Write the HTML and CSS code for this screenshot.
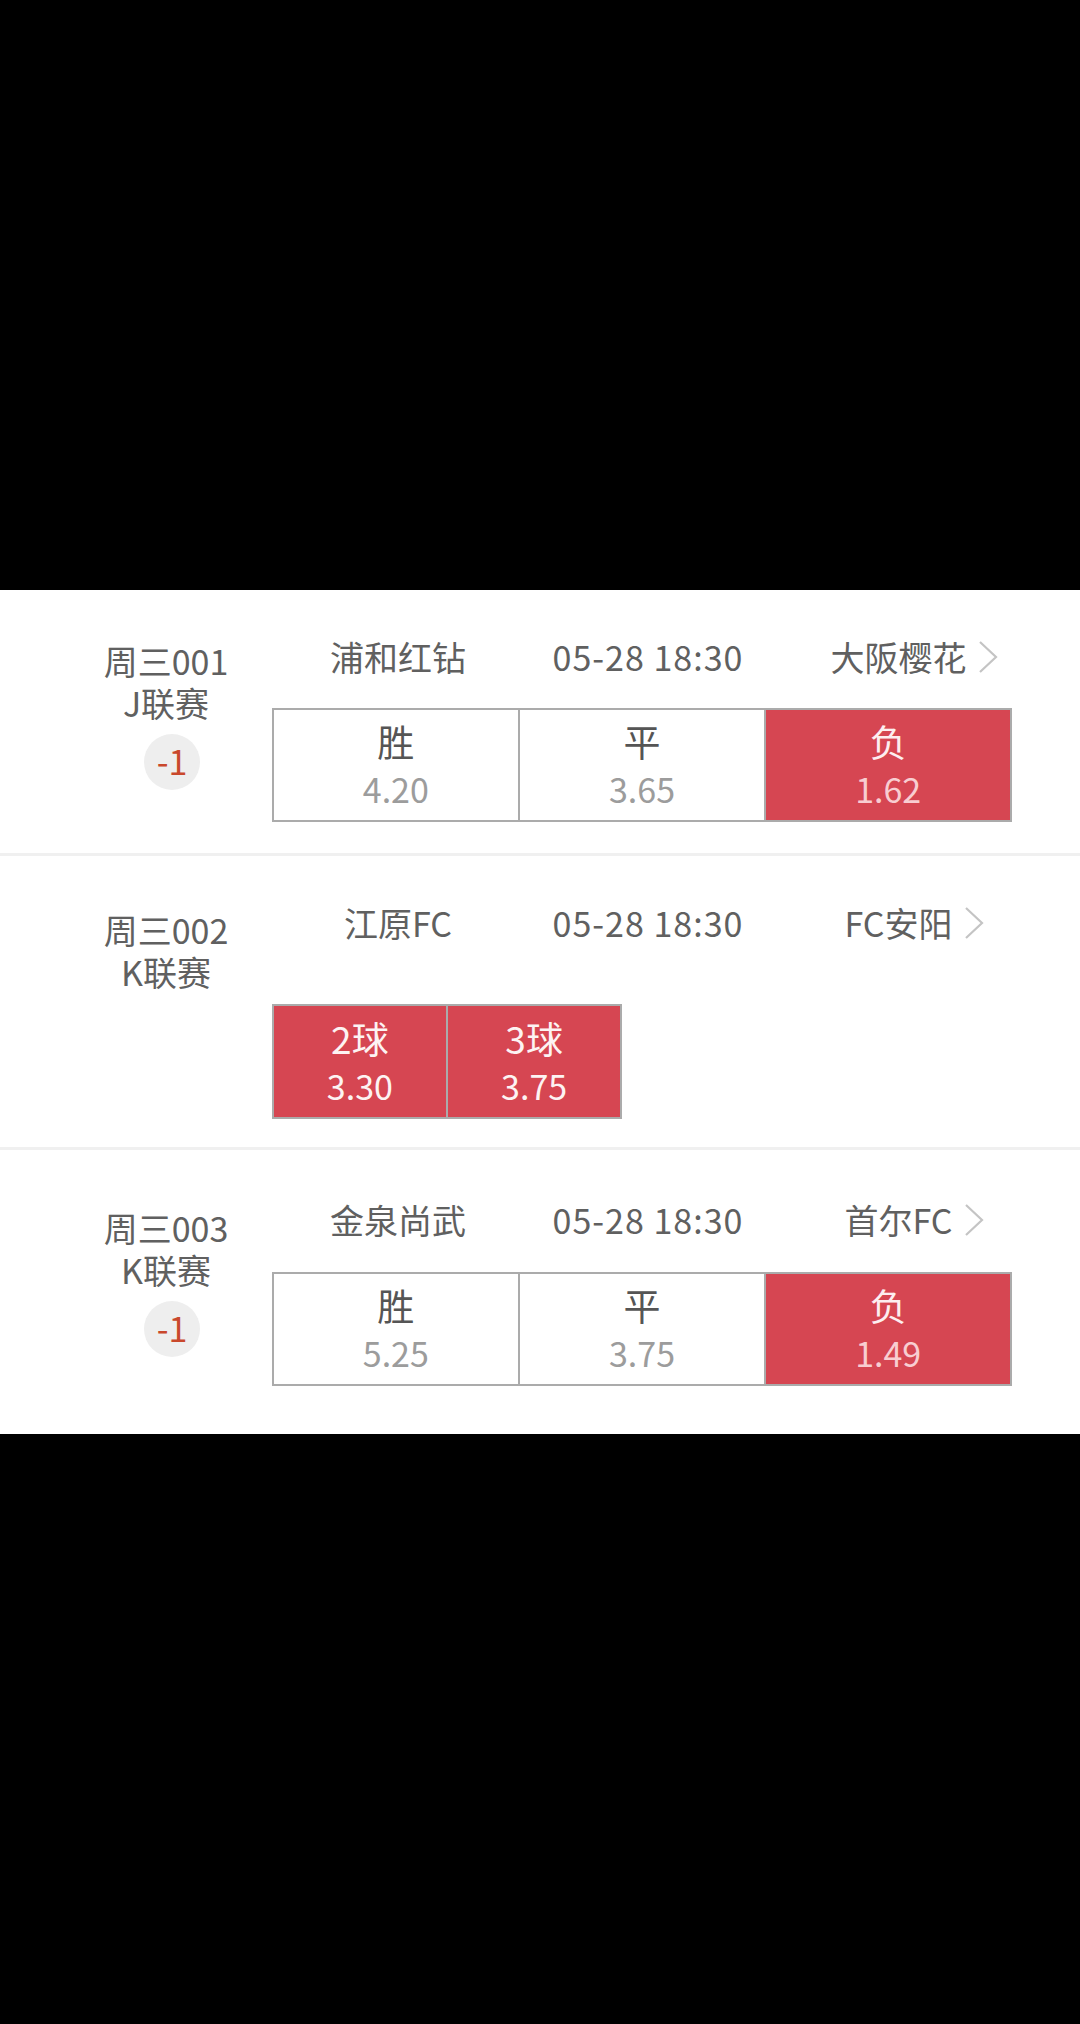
FILE: index.html
```html
<!DOCTYPE html>
<html lang="zh-CN">
<head>
<meta charset="utf-8">
<title>竞彩足球</title>
<link rel="stylesheet" href="styles.css">
</head>
<body>
<div class="list">
  <div class="match first">
    <div class="info">
      <div class="line">周三001</div>
      <div class="line">J联赛</div>
      <div class="handicap">-1</div>
    </div>
    <div class="main">
      <div class="head">
        <div class="team">浦和红钻</div>
        <div class="time">05-28 18:30</div>
        <div class="team away">大阪樱花<svg class="chev" viewBox="0 0 20 34" width="20" height="34"><polyline points="2,2 18,17 2,32" fill="none" stroke="#c4c4c4" stroke-width="2.2"/></svg></div>
      </div>
      <div class="odds">
        <div class="cell"><div class="lbl">胜</div><div class="val">4.20</div></div>
        <div class="cell"><div class="lbl">平</div><div class="val">3.65</div></div>
        <div class="cell on"><div class="lbl">负</div><div class="val">1.62</div></div>
      </div>
    </div>
  </div>

  <div class="match">
    <div class="info info-b">
      <div class="line">周三002</div>
      <div class="line">K联赛</div>
    </div>
    <div class="main">
      <div class="head">
        <div class="team">江原FC</div>
        <div class="time">05-28 18:30</div>
        <div class="team away">FC安阳<svg class="chev" viewBox="0 0 20 34" width="20" height="34"><polyline points="2,2 18,17 2,32" fill="none" stroke="#c4c4c4" stroke-width="2.2"/></svg></div>
      </div>
      <div class="odds goals">
        <div class="cell on white"><div class="lbl">2球</div><div class="val">3.30</div></div>
        <div class="cell on white"><div class="lbl">3球</div><div class="val">3.75</div></div>
      </div>
    </div>
  </div>

  <div class="match last">
    <div class="info info-c">
      <div class="line">周三003</div>
      <div class="line">K联赛</div>
      <div class="handicap">-1</div>
    </div>
    <div class="main main-c">
      <div class="head">
        <div class="team">金泉尚武</div>
        <div class="time">05-28 18:30</div>
        <div class="team away">首尔FC<svg class="chev" viewBox="0 0 20 34" width="20" height="34"><polyline points="2,2 18,17 2,32" fill="none" stroke="#c4c4c4" stroke-width="2.2"/></svg></div>
      </div>
      <div class="odds odds-c">
        <div class="cell"><div class="lbl">胜</div><div class="val">5.25</div></div>
        <div class="cell"><div class="lbl">平</div><div class="val">3.75</div></div>
        <div class="cell on"><div class="lbl">负</div><div class="val">1.49</div></div>
      </div>
    </div>
  </div>
</div>
</body>
</html>
```

FILE: styles.css
```css
html, body {
  margin: 0;
  padding: 0;
  background: #000;
}
body {
  width: 1080px;
  height: 2024px;
  font-family: "Noto Sans CJK SC", "Noto Sans", sans-serif;
  color: #606060;
}
.list {
  margin-top: 590px;
  background: #fff;
}
.match {
  display: flex;
  padding: 0 0 28px 60px;
  border-bottom: 3px solid #f0f0f0;
}
.match.first {
  padding-bottom: 31px;
}
.match.last {
  border-bottom: none;
  padding-bottom: 48px;
}
.info {
  flex: none;
  width: 212px;
  padding-top: 50px;
  text-align: center;
  font-size: 34px;
  line-height: 42px;
}
.info-b { padding-top: 53px; }
.info-c { padding-top: 57px; }
.handicap {
  width: 56px;
  height: 56px;
  margin: 10px auto 0;
  position: relative;
  left: 6px;
  border-radius: 50%;
  background: #eeeeee;
  color: #c9482c;
  font-size: 34px;
  line-height: 54px;
  text-align: center;
}
.main {
  flex: 1;
  padding-top: 46px;
}
.main-c {
  padding-top: 49px;
}
.head {
  display: grid;
  grid-template-columns: 252px 248px 284px;
  font-size: 34px;
  line-height: 42px;
  height: 42px;
}
.team, .time {
  display: flex;
  justify-content: center;
  align-items: center;
  white-space: nowrap;
}
.time {
  letter-spacing: 1px;
}
.away {
  gap: 11px;
}
.chev {
  display: block;
  flex: none;
}
.odds {
  display: flex;
  width: 740px;
  box-sizing: border-box;
  margin-top: 30px;
  border: 2px solid #ababab;
  background: #ababab;
  gap: 2.5px;
  height: 114px;
}
.odds-c { margin-top: 31px; }
.odds.goals {
  width: 350px;
  margin-top: 60px;
  height: 115px;
}
.cell {
  flex: 1;
  background: #fff;
  display: flex;
  flex-direction: column;
  justify-content: center;
  align-items: center;
}
.lbl {
  font-size: 37px;
  line-height: 47px;
  color: #555;
}
.val {
  font-size: 34px;
  line-height: 47px;
  color: #9c9c9c;
}
.cell.on {
  background: #d64652;
}
.cell.on .lbl { color: #fdeef0; }
.cell.on .val { color: #f8cdd1; }
.cell.on.white .lbl,
.cell.on.white .val { color: #fdf3f3; }
```
